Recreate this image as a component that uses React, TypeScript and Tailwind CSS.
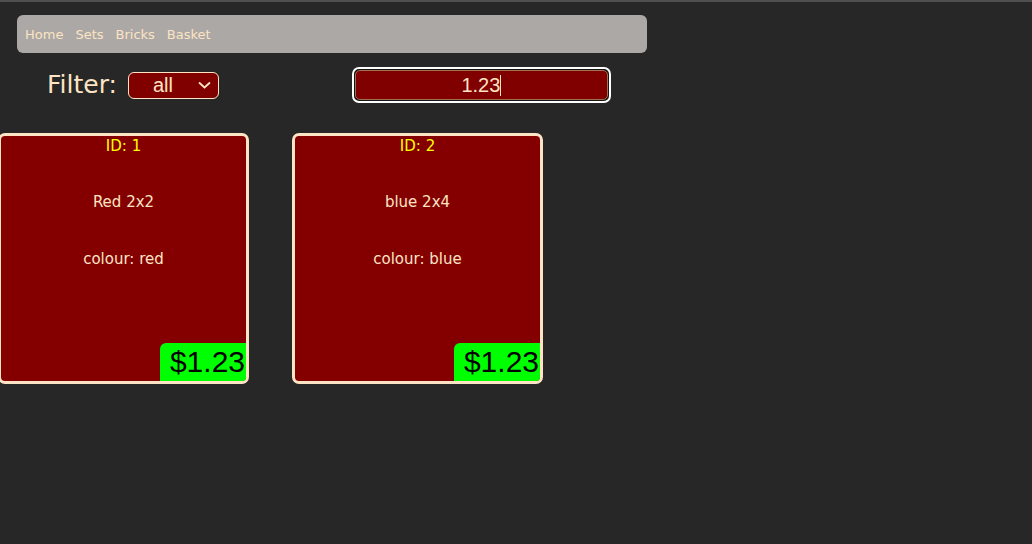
import React from "react";

const Card = ({ id, name, colour, first }: { id: number; name: string; colour: string; first?: boolean }) => (
  <div
    className={`relative w-[251px] h-[251px] shrink-0 rounded-[7px] border-[3px] border-[#fde4c4] bg-[#840000] overflow-hidden flex flex-col items-center ${first ? "ml-[-2px]" : ""}`}
    style={{ fontFamily: '"DejaVu Sans", Verdana, sans-serif' }}
  >
    <div className="text-[15px] leading-[18px] text-[#ffff00] mt-[1px]">ID: {id}</div>
    <div className="text-[15px] leading-[18px] text-[#fde4c4] mt-[38px]">{name}</div>
    <div className="text-[15px] leading-[18px] text-[#fde4c4] mt-[39px]">colour: {colour}</div>
    <div
      className="absolute right-0 bottom-0 w-[86px] h-[38px] bg-[#00ff00] rounded-tl-[6px] flex items-center justify-end pr-[1px] text-black text-[30px] leading-none"
      style={{ fontFamily: '"Liberation Sans", Arial, sans-serif' }}
    >
      $1.23
    </div>
  </div>
);

export default function App() {
  return (
    <div className="w-[1032px] h-[544px] bg-[#272727] overflow-hidden flex flex-col">
      <div className="h-[2px] bg-[#505050] shrink-0" />
      <nav
        className="ml-[17px] mt-[13px] w-[630px] h-[38px] rounded-[6px] bg-[#aca8a6] flex items-center pl-[8px] pt-[2px] gap-[12px] text-[13px] text-[#fde4c4]"
        style={{ fontFamily: '"DejaVu Sans", Verdana, sans-serif' }}
      >
        <span>Home</span>
        <span>Sets</span>
        <span>Bricks</span>
        <span>Basket</span>
      </nav>
      <div className="flex items-center mt-[14px] h-[36px]">
        <span
          className="ml-[47px] mt-[-2px] text-[25px] leading-none text-[#fde4c4]"
          style={{ fontFamily: '"DejaVu Sans", Verdana, sans-serif' }}
        >
          Filter:
        </span>
        <div
          className="ml-[11px] w-[91px] h-[27px] rounded-[6px] border border-[#fde4c4] bg-[#800000] flex items-center text-[#fde4c4] text-[20px]"
          style={{ fontFamily: '"Liberation Sans", Arial, sans-serif' }}
        >
          <span className="ml-[24px]">all</span>
          <svg className="ml-auto mr-[7px]" width="13" height="8" viewBox="0 0 13 8" fill="none">
            <path d="M1 1.5 L6.5 6.5 L12 1.5" stroke="#fde4c4" strokeWidth="1.8" />
          </svg>
        </div>
        <div className="ml-[133px] w-[259px] h-[36px] rounded-[7px] border-2 border-white bg-[#151515] p-[1px] flex">
          <div
            className="flex-1 rounded-[5px] border border-[#a0704f] bg-[#800000] flex items-center justify-center text-[20px] text-[#fde4c4]"
            style={{ fontFamily: '"Liberation Sans", Arial, sans-serif' }}
          >
            <span>1.23</span>
            <span className="w-px h-[21px] bg-[#fde4c4]" />
          </div>
        </div>
      </div>
      <div className="flex gap-[43px] mt-[30px]">
        <Card id={1} name="Red 2x2" colour="red" first />
        <Card id={2} name="blue 2x4" colour="blue" />
      </div>
    </div>
  );
}
